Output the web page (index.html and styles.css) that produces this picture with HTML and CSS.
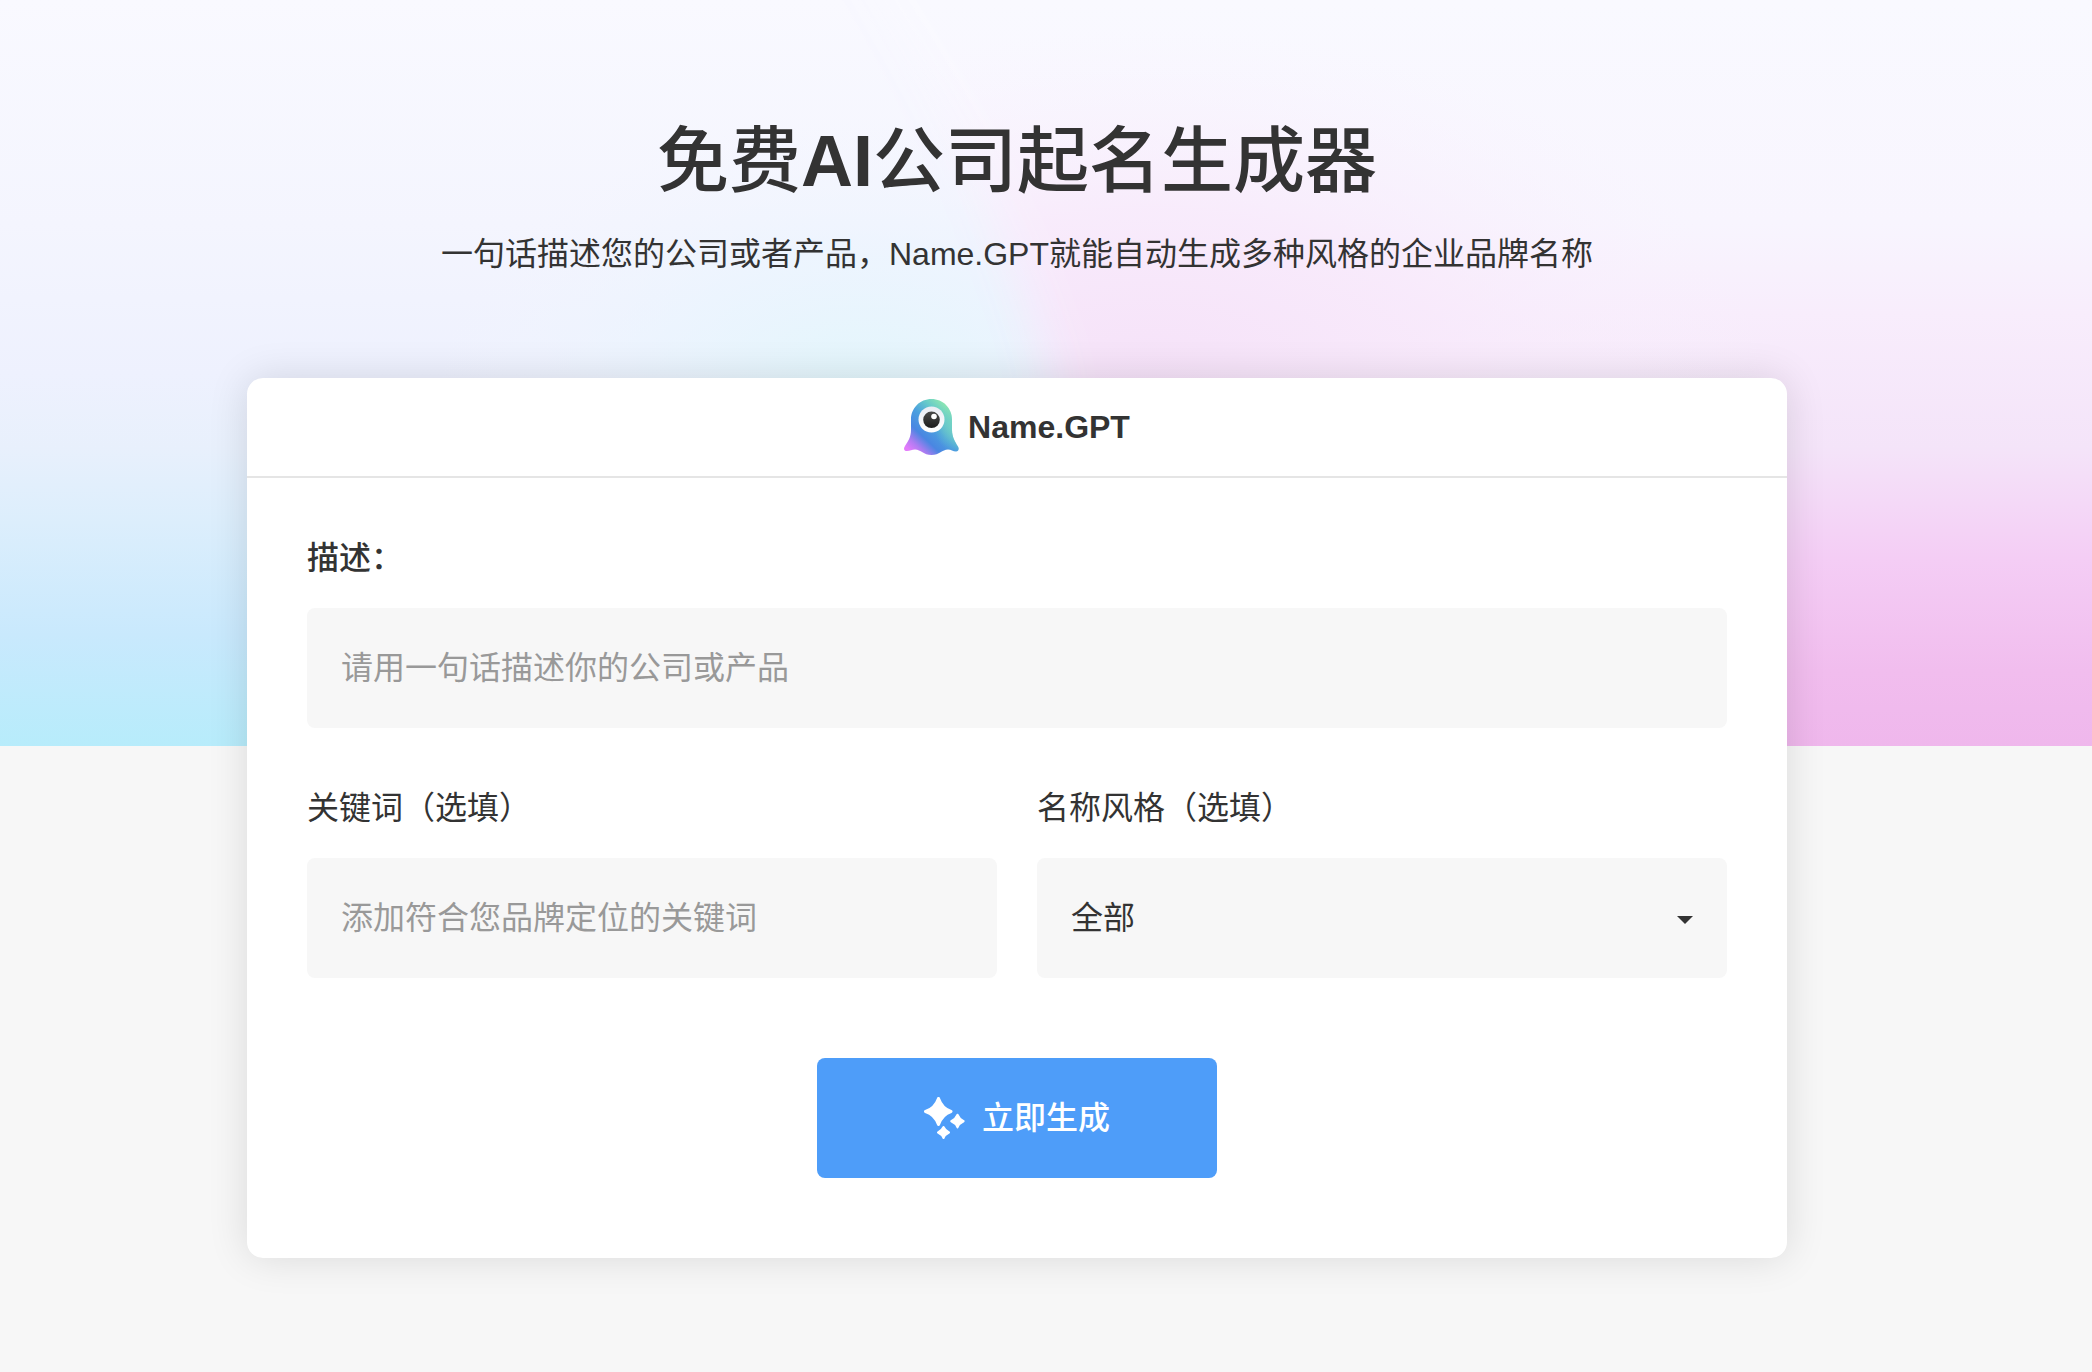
FILE: index.html
```html
<!DOCTYPE html>
<html lang="zh-CN">
<head>
    <meta charset="UTF-8">
    <meta name="viewport" content="width=device-width, initial-scale=1.0">
    <title>免费AI公司起名生成器</title>
    <link rel="stylesheet" href="styles.css">
</head>
<body>

<main class="page">
    <svg class="page-bg" viewBox="0 0 2092 746" preserveAspectRatio="none" aria-hidden="true">
        <defs>
            <linearGradient id="bgLeft" x1="0" y1="0" x2="0" y2="1">
                <stop offset="0" stop-color="#f9f9ff"/>
                <stop offset="0.3" stop-color="#f4f5fe"/>
                <stop offset="0.5" stop-color="#eef1fe"/>
                <stop offset="0.6" stop-color="#e8f0fc"/>
                <stop offset="0.7" stop-color="#dceefc"/>
                <stop offset="0.85" stop-color="#c9e9fd"/>
                <stop offset="1" stop-color="#b7ecfb"/>
            </linearGradient>
            <linearGradient id="bgRight" x1="0" y1="0" x2="0" y2="1">
                <stop offset="0" stop-color="#f9f9ff"/>
                <stop offset="0.3" stop-color="#f8f5fe"/>
                <stop offset="0.42" stop-color="#f8edfc"/>
                <stop offset="0.6" stop-color="#f4e4f9"/>
                <stop offset="0.75" stop-color="#f4cdf5"/>
                <stop offset="0.9" stop-color="#f1bdee"/>
                <stop offset="1" stop-color="#efb7ec"/>
            </linearGradient>
            <radialGradient id="bgCyan">
                <stop offset="0" stop-color="#e1f6fb"/>
                <stop offset="0.5" stop-color="#eaf5fe" stop-opacity="0.7"/>
                <stop offset="1" stop-color="#f2f5ff" stop-opacity="0"/>
            </radialGradient>
            <radialGradient id="bgPink">
                <stop offset="0" stop-color="#f5e1f8"/>
                <stop offset="0.5" stop-color="#f8e9fb" stop-opacity="0.8"/>
                <stop offset="1" stop-color="#f9f3fe" stop-opacity="0"/>
            </radialGradient>
            <filter id="soft" x="-20%" y="-20%" width="140%" height="140%">
                <feGaussianBlur stdDeviation="24"/>
            </filter>
            <mask id="rightSide" maskUnits="userSpaceOnUse" x="0" y="0" width="2092" height="746">
                <path d="M820-100C900 40 990 160 1052 380V900H2300V-100Z" fill="#fff" filter="url(#soft)"/>
            </mask>
        </defs>
        <rect width="2092" height="746" fill="url(#bgLeft)"/>
        <ellipse cx="860" cy="400" rx="430" ry="280" fill="url(#bgCyan)"/>
        <g mask="url(#rightSide)">
            <rect width="2092" height="746" fill="url(#bgRight)"/>
            <ellipse cx="1150" cy="390" rx="620" ry="360" fill="url(#bgPink)"/>
        </g>
    </svg>

    <header class="intro">
        <h1>免费<b>AI</b>公司起名生成器</h1>
        <p>一句话描述您的公司或者产品，Name.GPT就能自动生成多种风格的企业品牌名称</p>
    </header>

    <section class="card">
        <div class="card-header">
            <svg class="logo" viewBox="0 0 56 56" aria-hidden="true">
                <defs>
                    <linearGradient id="ghostBody" x1="0.08" y1="0.9" x2="0.82" y2="0.1">
                        <stop offset="0" stop-color="#e37bfb"/>
                        <stop offset="0.14" stop-color="#b07cf2"/>
                        <stop offset="0.32" stop-color="#4a86e2"/>
                        <stop offset="0.55" stop-color="#4b9fdf"/>
                        <stop offset="0.78" stop-color="#67cbc9"/>
                        <stop offset="1" stop-color="#92ebae"/>
                    </linearGradient>
                    <radialGradient id="ghostSide" cx="1" cy="0.5" r="0.45">
                        <stop offset="0" stop-color="#74d3c4"/>
                        <stop offset="1" stop-color="#74d3c4" stop-opacity="0"/>
                    </radialGradient>
                    <linearGradient id="ghostEye" x1="0" y1="0" x2="0" y2="1">
                        <stop offset="0" stop-color="#e9ecf4"/>
                        <stop offset="1" stop-color="#ffffff"/>
                    </linearGradient>
                    <linearGradient id="ghostPupil" x1="0" y1="0" x2="0" y2="1">
                        <stop offset="0" stop-color="#4a4a4a"/>
                        <stop offset="1" stop-color="#1c1c1c"/>
                    </linearGradient>
                    <path id="ghostShape" d="M27.500 0C16 0 7 9 7 20.500V31C7 38 4 42.500 1 47C-1 50 .3 52 3 52C6 52 8 50.400 11 50.400C17 50.400 19.500 56 27.500 56S38 50.400 44 50.400C47 50.400 49 52.500 52 52.500C54.500 52.500 55.500 50 54 47.500C51 42.500 48 38 48 31V20.500C48 9 39 0 27.500 0Z"/>
                </defs>
                <use href="#ghostShape" fill="url(#ghostBody)"/>
                <use href="#ghostShape" fill="url(#ghostSide)"/>
                <circle cx="27.500" cy="20.500" r="13" fill="url(#ghostEye)"/>
                <circle cx="27.500" cy="20.800" r="8.300" fill="url(#ghostPupil)"/>
                <circle cx="30" cy="17.500" r="2.800" fill="#fff"/>
            </svg>
            <span>Name.GPT</span>
        </div>

        <form class="name-form">
            <div class="field">
                <label class="strong" for="description">描述：</label>
                <input type="text" id="description" placeholder="请用一句话描述你的公司或产品">
            </div>
            <div class="field-row">
                <div class="field">
                    <label for="keywords">关键词（选填）</label>
                    <input type="text" id="keywords" placeholder="添加符合您品牌定位的关键词">
                </div>
                <div class="field">
                    <label for="name_style">名称风格（选填）</label>
                    <div class="select-box">
                        <select id="name_style">
                            <option value="all">全部</option>
                        </select>
                        <svg class="arrow" viewBox="0 0 16 8" aria-hidden="true"><path d="M0 0H16L8 8Z" fill="#333"/></svg>
                    </div>
                </div>
            </div>
            <button type="button">
                <svg class="sparkles" viewBox="0 0 42 42" aria-hidden="true">
                    <g fill="#fff" stroke="#fff" stroke-linejoin="round">
                        <path d="M14.500 1.500Q18 11.500 27 14.500Q18 17.500 14.500 27.500Q11 17.500 1.500 14.500Q11 11.500 14.500 1.500Z" stroke-width="3"/>
                        <path d="M33.500 17.700Q35.300 22.200 39.700 24.200Q35.300 26 33.500 30.500Q31.700 26 27.200 24.200Q31.700 22.200 33.500 17.700Z" stroke-width="2"/>
                        <path d="M19.500 30Q21.200 33.600 25 35.500Q21.200 37.200 19.500 41Q17.800 37.200 14 35.500Q17.800 33.600 19.500 30Z" stroke-width="2"/>
                    </g>
                </svg>
                立即生成
            </button>
        </form>
    </section>
</main>

</body>
</html>
```
FILE: styles.css
```css
* {
    box-sizing: border-box;
}
body {
    margin: 0;
    font-family: "Liberation Sans", "Noto Sans CJK SC", sans-serif;
    font-size: 32px;
    line-height: 40px;
    color: #333;
    background-color: #f7f7f7;
}
.page {
    position: relative;
    min-height: 100vh;
    padding: 113px 305px 114px 247px;
}
.page-bg {
    position: absolute;
    top: 0;
    left: 0;
    z-index: -1;
    width: 100%;
    height: 746px;
}
.intro {
    height: 265px;
    text-align: center;
}
.intro h1 {
    margin: 0 0 25px;
    font-size: 72px;
    font-weight: 500;
    line-height: 96px;
}
.intro p {
    margin: 0;
}
.card {
    background-color: #fff;
    border-radius: 16px;
    box-shadow: 0 0 40px rgba(0, 0, 0, 0.12);
}
.card-header {
    display: flex;
    justify-content: center;
    align-items: center;
    gap: 8px;
    height: 100px;
    border-bottom: 2px solid #e5e5e5;
    font-weight: bold;
}
.logo {
    width: 56px;
    height: 56px;
}
.name-form {
    display: flex;
    flex-direction: column;
    gap: 60px;
    padding: 60px 60px 80px;
}
.field {
    display: flex;
    flex: 1;
    flex-direction: column;
    gap: 30px;
}
.field-row {
    display: flex;
    gap: 40px;
}
.strong {
    font-weight: 500;
}
input, select {
    width: 100%;
    height: 120px;
    padding: 0 34px;
    border: none;
    border-radius: 8px;
    background-color: #f7f7f7;
    color: #333;
    font: inherit;
}
input::placeholder {
    color: #999;
    opacity: 1;
}
.select-box {
    position: relative;
}
select {
    display: block;
    appearance: none;
}
.arrow {
    position: absolute;
    top: 58px;
    right: 34px;
    width: 16px;
    height: 8px;
    pointer-events: none;
}
button {
    display: flex;
    justify-content: center;
    align-items: center;
    gap: 16px;
    align-self: center;
    width: 400px;
    height: 120px;
    margin-top: 20px;
    border: none;
    border-radius: 8px;
    background-color: #4e9df9;
    color: #fff;
    font: inherit;
    font-weight: 500;
    cursor: pointer;
}
.sparkles {
    width: 42px;
    height: 42px;
}
```
